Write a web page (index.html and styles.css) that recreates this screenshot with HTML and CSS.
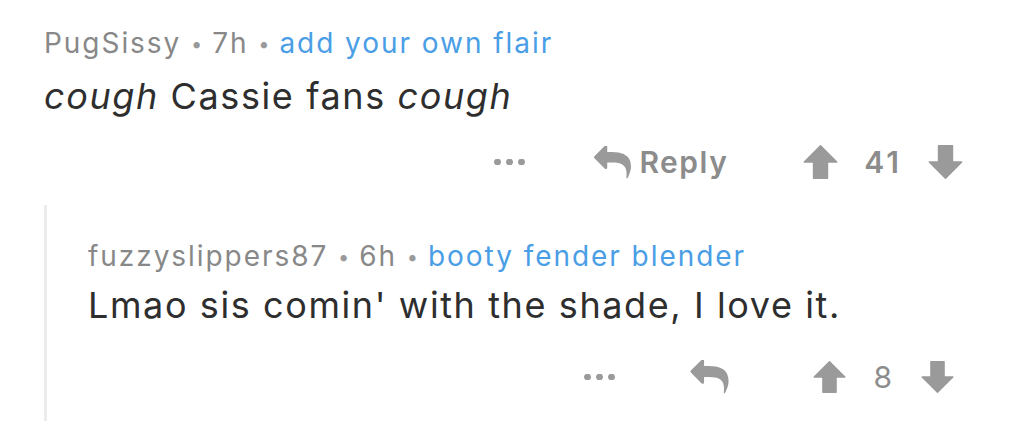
FILE: index.html
```html
<!DOCTYPE html>
<html lang="en">
<head>
    <meta charset="UTF-8">
    <meta name="viewport" content="width=device-width, initial-scale=1.0">
    <title>Comments</title>
    <link rel="stylesheet" href="styles.css">
</head>
<body>
    <div class="thread">
        <div class="comment">
            <div class="meta">
                <span class="author">PugSissy</span>
                <span class="sep">•</span>
                <span>7h</span>
                <span class="sep">•</span>
                <span class="flair">add your own flair</span>
            </div>
            <div class="text"><em>cough</em> Cassie fans <em>cough</em></div>
            <div class="actions">
                <span class="more">
                    <svg viewBox="0 0 30 6" width="31" height="6"><circle cx="3" cy="3" r="3"/><circle cx="15" cy="3" r="3"/><circle cx="27" cy="3" r="3"/></svg>
                </span>
                <span class="reply">
                    <svg class="reply-icon" viewBox="0 96 1792 1600" width="37" height="33"><path d="M1792 1120q0 166-127 451-3 7-10.5 24t-13.5 30-13 22q-12 17-28 17-15 0-23.5-10t-8.5-25q0-9 2.5-26.5t2.5-23.5q5-68 5-123 0-101-17.5-181t-48.5-138.5-80-101-105.5-69.5-133-42.5-154-21.5-175.5-6h-224v256q0 26-19 45t-45 19-45-19l-512-512q-19-19-19-45t19-45l512-512q19-19 45-19t45 19 19 45v256h224q713 0 875 403 53 134 53 333z"/></svg>
                    <span class="reply-label">Reply</span>
                </span>
                <span class="votes">
                    <svg viewBox="0 0 24 24" width="37" height="38"><path d="M12 1.5 L22.5 12 L16.5 12 L16.5 22.5 L7.5 22.5 L7.5 12 L1.5 12 Z" stroke-linejoin="round" stroke-width="1"/></svg>
                    <span class="score bold">41</span>
                    <svg viewBox="0 0 24 24" width="37" height="38"><path d="M12 22.5 L22.5 12 L16.5 12 L16.5 1.5 L7.5 1.5 L7.5 12 L1.5 12 Z" stroke-linejoin="round" stroke-width="1"/></svg>
                </span>
            </div>
        </div>

        <div class="comment child">
            <div class="meta">
                <span class="author">fuzzyslippers87</span>
                <span class="sep">•</span>
                <span>6h</span>
                <span class="sep">•</span>
                <span class="flair">booty fender blender</span>
            </div>
            <div class="text">Lmao sis comin' with the shade, I love it.</div>
            <div class="actions">
                <span class="more">
                    <svg viewBox="0 0 30 6" width="31" height="6"><circle cx="3" cy="3" r="3"/><circle cx="15" cy="3" r="3"/><circle cx="27" cy="3" r="3"/></svg>
                </span>
                <span class="reply">
                    <svg class="reply-icon" viewBox="0 96 1792 1600" width="39" height="34"><path d="M1792 1120q0 166-127 451-3 7-10.5 24t-13.5 30-13 22q-12 17-28 17-15 0-23.5-10t-8.5-25q0-9 2.5-26.5t2.5-23.5q5-68 5-123 0-101-17.5-181t-48.5-138.5-80-101-105.5-69.5-133-42.5-154-21.5-175.5-6h-224v256q0 26-19 45t-45 19-45-19l-512-512q-19-19-19-45t19-45l512-512q19-19 45-19t45 19 19 45v256h224q713 0 875 403 53 134 53 333z"/></svg>
                </span>
                <span class="votes">
                    <svg viewBox="0 0 24 24" width="35" height="36"><path d="M12 1.5 L22.5 12 L16.5 12 L16.5 22.5 L7.5 22.5 L7.5 12 L1.5 12 Z" stroke-linejoin="round" stroke-width="1"/></svg>
                    <span class="score">8</span>
                    <svg viewBox="0 0 24 24" width="35" height="36"><path d="M12 22.5 L22.5 12 L16.5 12 L16.5 1.5 L7.5 1.5 L7.5 12 L1.5 12 Z" stroke-linejoin="round" stroke-width="1"/></svg>
                </span>
            </div>
        </div>
    </div>
</body>
</html>
```

FILE: styles.css
```css
body {
    margin: 0;
    background: #fff;
    font-family: Inter, "Open Sans", sans-serif;
    color: #2e2e2e;
}
.thread {
    padding: 25px 60px 0 44px;
}
.meta {
    font-size: 28px;
    line-height: 36px;
    color: #888;
    letter-spacing: 1.95px;
}
.meta .sep {
    font-size: 20px;
    color: #999;
    vertical-align: 2px;
    letter-spacing: 0;
}
.flair { color: #4a9ee6; }
.text {
    font-size: 36px;
    line-height: 46px;
    margin-top: 11px;
    letter-spacing: 1.6px;
}
.actions {
    display: flex;
    align-items: center;
    justify-content: flex-end;
    height: 40px;
    margin-top: 23px;
}
.actions svg {
    fill: #9a9a9a;
    stroke: #9a9a9a;
    display: block;
}
.more { margin-right: 69px; }
.reply {
    display: flex;
    align-items: center;
    gap: 8px;
    margin-right: 74px;
}
.reply-label {
    font-size: 30px;
    font-weight: 600;
    color: #8c8c8c;
    letter-spacing: 1.5px;
}
.votes {
    display: flex;
    align-items: center;
    gap: 25px;
}
.score {
    font-size: 30px;
    color: #8c8c8c;
    letter-spacing: 2px;
}
.score.bold {
    font-weight: 600;
    letter-spacing: 3px;
}
.child {
    margin-top: 23px;
    border-left: 3px solid #ececec;
    padding: 33px 9px 24px 41px;
}
.child .text { margin-top: 7px; }
.child .actions { margin-top: 29px; }
.child .more { margin-right: 75px; }
.child .reply { margin-right: 83px; }
.child .votes { gap: 26px; }
```
